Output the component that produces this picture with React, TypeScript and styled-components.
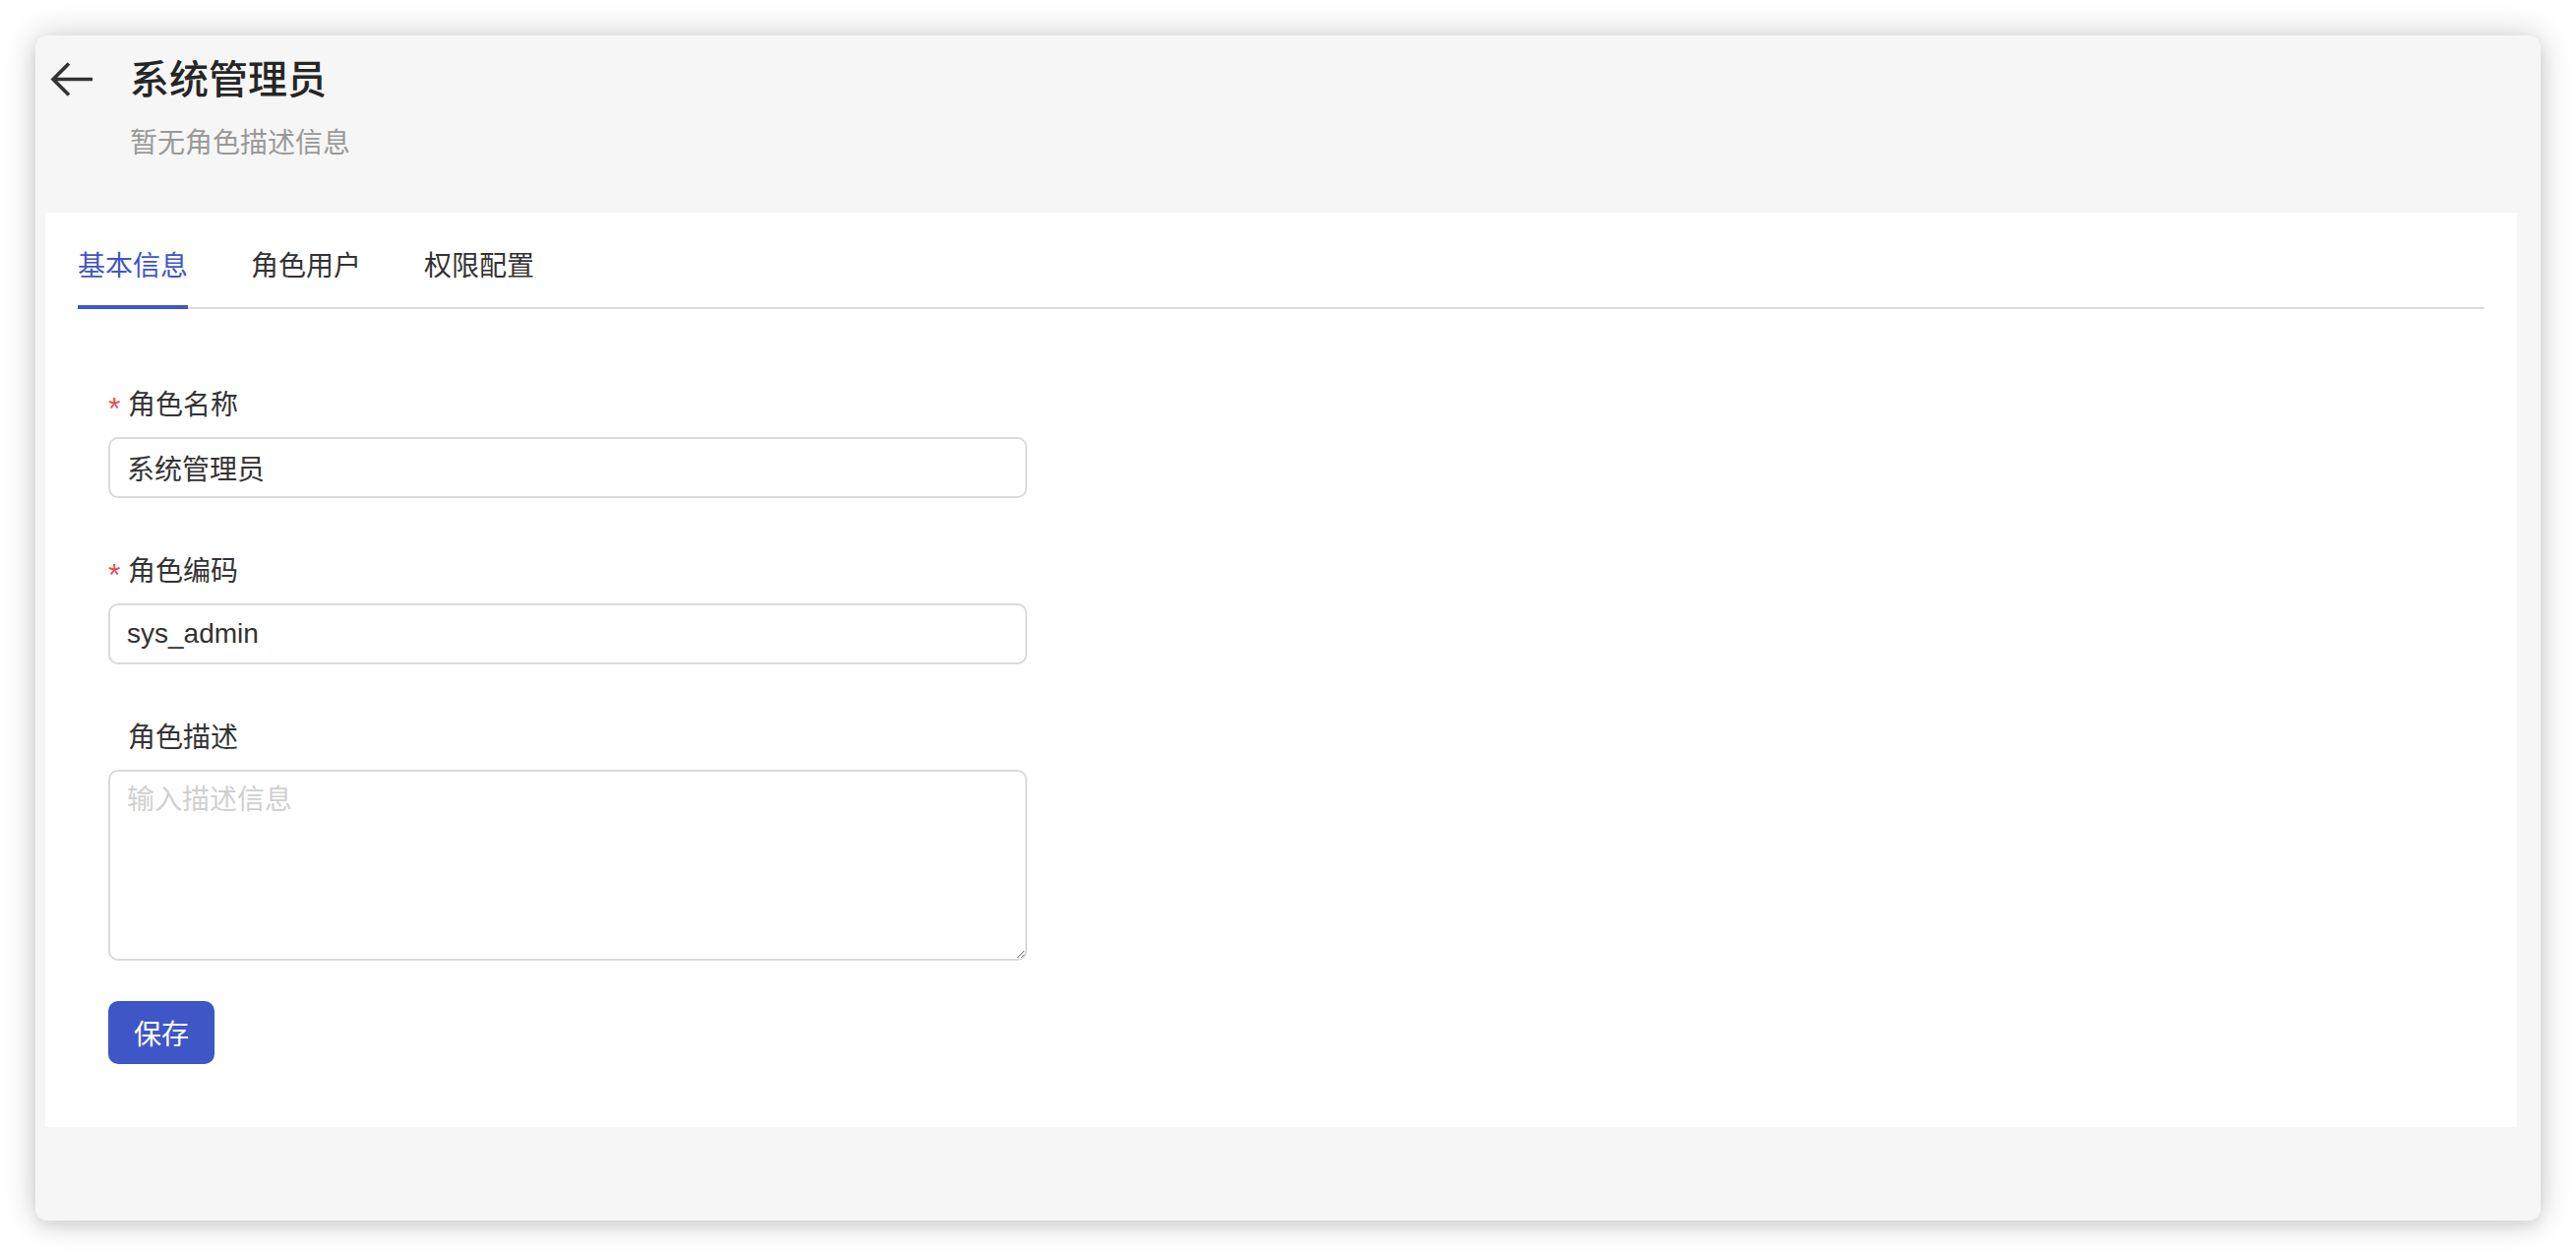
import React from "react";
import styled, { createGlobalStyle } from "styled-components";

const GlobalStyle = createGlobalStyle`
  html, body {
    margin: 0;
    padding: 0;
    background: #ffffff;
  }
  body {
    font-family: "Noto Sans CJK SC", "Noto Sans", sans-serif;
    color: #333333;
  }
  * { box-sizing: border-box; }
`;

const Page = styled.div`
  padding: 36px;
`;

const Window = styled.div`
  height: 1204px;
  background: #f6f6f6;
  border-radius: 12px;
  box-shadow: 0 0 34px rgba(0, 0, 0, 0.2), 0 6px 16px rgba(0, 0, 0, 0.08);
  display: flex;
  flex-direction: column;
`;

const Header = styled.header`
  display: grid;
  grid-template-columns: auto 1fr;
  column-gap: 36px;
  padding: 14px 0 53px 15px;
`;

const BackButton = styled.button`
  grid-row: 1;
  grid-column: 1;
  align-self: center;
  margin-top: 4px;
  padding: 0;
  border: none;
  background: none;
  display: flex;
  cursor: pointer;
`;

const Title = styled.h1`
  grid-row: 1;
  grid-column: 2;
  margin: 0;
  font-size: 40px;
  line-height: 56px;
  font-weight: 500;
  color: #262626;
`;

const Subtitle = styled.p`
  grid-row: 2;
  grid-column: 2;
  margin: 17px 0 0;
  font-size: 28px;
  line-height: 40px;
  color: #999999;
`;

const Panel = styled.section`
  margin: 0 24px 0 10px;
  background: #ffffff;
  padding: 0 33px 64px;
`;

const TabBar = styled.nav`
  display: flex;
  gap: 64px;
  padding-top: 32px;
  border-bottom: 2px solid #dcdcdc;
`;

const Tab = styled.div<{ $active?: boolean }>`
  position: relative;
  margin-bottom: -2px;
  padding-bottom: 26px;
  font-size: 28px;
  line-height: 40px;
  color: ${(p) => (p.$active ? "#3f56c6" : "#333333")};
  cursor: pointer;

  &::after {
    content: "";
    position: absolute;
    left: 0;
    right: 0;
    bottom: 0;
    height: 4px;
    background: ${(p) => (p.$active ? "#3f56c6" : "transparent")};
  }
`;

const Form = styled.form`
  display: flex;
  flex-direction: column;
  align-items: flex-start;
  padding: 73px 0 0 31px;
`;

const Field = styled.div<{ $gap?: number }>`
  display: flex;
  flex-direction: column;
  margin-bottom: ${(p) => p.$gap ?? 50}px;
`;

const Label = styled.label`
  display: flex;
  align-items: center;
  font-size: 28px;
  line-height: 44px;
  color: #333333;
  margin-bottom: 13px;
`;

const Required = styled.span`
  display: inline-flex;
  width: 20px;
  font-family: "Liberation Sans", sans-serif;
  font-size: 32px;
  line-height: 1;
  color: #e0524f;
  transform: translateY(6px);
`;

const Spacer = styled.span`
  display: inline-block;
  width: 20px;
`;

const TextInput = styled.input`
  width: 934px;
  height: 62px;
  border: 2px solid #dadada;
  border-radius: 10px;
  padding: 0 17px;
  font-family: "Liberation Sans", "Noto Sans CJK SC", sans-serif;
  font-size: 28px;
  color: #333333;
  background: #ffffff;
  outline: none;
`;

const TextArea = styled.textarea`
  width: 934px;
  height: 194px;
  border: 2px solid #dadada;
  border-radius: 10px;
  padding: 6px 17px;
  font-family: "Noto Sans CJK SC", sans-serif;
  font-size: 28px;
  line-height: 40px;
  color: #333333;
  background: #ffffff;
  outline: none;
  display: block;

  &::placeholder {
    color: #d0d0d0;
  }
`;

const SaveButton = styled.button`
  height: 64px;
  padding: 0 26px;
  border: none;
  border-radius: 10px;
  background: #3f56c6;
  color: #ffffff;
  font-family: "Noto Sans CJK SC", sans-serif;
  font-size: 28px;
  cursor: pointer;
`;

const BackArrow = () => (
  <svg width="45" height="37" viewBox="0 0 45 37" fill="none">
    <path
      d="M43 18.5H3.5M19 2.5L3 18.5L19 34.5"
      stroke="#333333"
      strokeWidth="3.6"
      strokeLinecap="butt"
      strokeLinejoin="miter"
    />
  </svg>
);

export default function App() {
  return (
    <>
      <GlobalStyle />
      <Page>
        <Window>
          <Header>
            <BackButton type="button" aria-label="返回">
              <BackArrow />
            </BackButton>
            <Title>系统管理员</Title>
            <Subtitle>暂无角色描述信息</Subtitle>
          </Header>
          <Panel>
            <TabBar>
              <Tab $active>基本信息</Tab>
              <Tab>角色用户</Tab>
              <Tab>权限配置</Tab>
            </TabBar>
            <Form onSubmit={(e) => e.preventDefault()}>
              <Field>
                <Label>
                  <Required>*</Required>角色名称
                </Label>
                <TextInput defaultValue="系统管理员" />
              </Field>
              <Field>
                <Label>
                  <Required>*</Required>角色编码
                </Label>
                <TextInput defaultValue="sys_admin" />
              </Field>
              <Field $gap={41}>
                <Label>
                  <Spacer />角色描述
                </Label>
                <TextArea placeholder="输入描述信息" />
              </Field>
              <SaveButton type="submit">保存</SaveButton>
            </Form>
          </Panel>
        </Window>
      </Page>
    </>
  );
}
